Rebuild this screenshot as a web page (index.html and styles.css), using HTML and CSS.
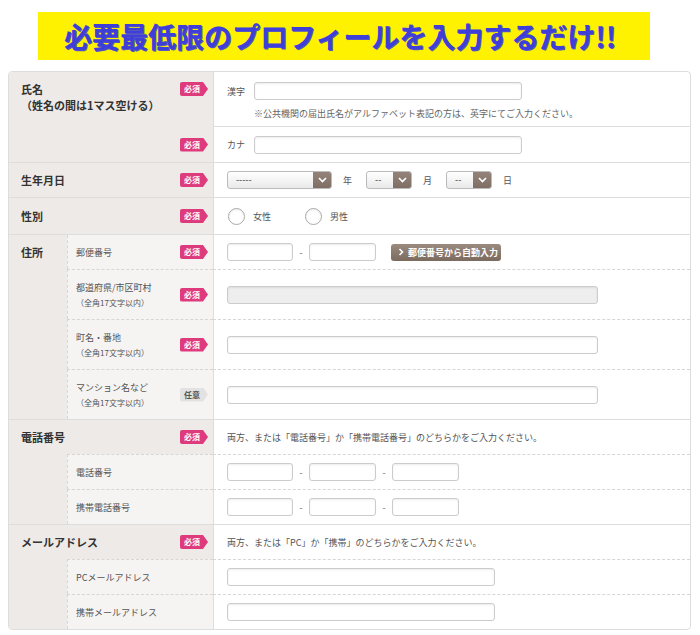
FILE: index.html
```html
<!DOCTYPE html>
<html lang="ja">
<head>
<meta charset="utf-8">
<title>プロフィール入力</title>
<link rel="stylesheet" href="styles.css">
</head>
<body>
<div class="page">
  <div class="banner">必要最低限のプロフィールを入力するだけ!!</div>
  <div class="form">
    <!-- 氏名 -->
    <div class="sec sec-name">
      <div class="lab lab-top"><div class="lt">氏名<br>（姓名の間は1マス空ける）</div><span class="badge">必須</span></div>
      <div class="val val-name">
        <div class="line"><span class="pre">漢字</span><span class="inp w-name"></span></div>
        <p class="note">※公共機関の届出氏名がアルファベット表記の方は、英字にてご入力ください。</p>
      </div>
      <div class="lab"><span></span><span class="badge">必須</span></div>
      <div class="val"><span class="pre">カナ</span><span class="inp w-name"></span></div>
    </div>
    <!-- 生年月日 -->
    <div class="sec sec-birth">
      <div class="lab"><span>生年月日</span><span class="badge">必須</span></div>
      <div class="val">
        <span class="sel w-year"><span class="st">-----</span><span class="sa"><svg width="9" height="6" viewBox="0 0 9 6"><polyline points="1,1 4.5,4.5 8,1" fill="none" stroke="#fff" stroke-width="1.7"/></svg></span></span>
        <span class="unit">年</span>
        <span class="sel w-md"><span class="st">--</span><span class="sa"><svg width="9" height="6" viewBox="0 0 9 6"><polyline points="1,1 4.5,4.5 8,1" fill="none" stroke="#fff" stroke-width="1.7"/></svg></span></span>
        <span class="unit">月</span>
        <span class="sel w-md"><span class="st">--</span><span class="sa"><svg width="9" height="6" viewBox="0 0 9 6"><polyline points="1,1 4.5,4.5 8,1" fill="none" stroke="#fff" stroke-width="1.7"/></svg></span></span>
        <span class="unit">日</span>
      </div>
    </div>
    <!-- 性別 -->
    <div class="sec sec-sex">
      <div class="lab"><span>性別</span><span class="badge">必須</span></div>
      <div class="val">
        <span class="radio"></span><span class="rl">女性</span>
        <span class="radio"></span><span class="rl">男性</span>
      </div>
    </div>
    <!-- 住所 -->
    <div class="sec sec-addr">
      <div class="main main-addr">住所</div>
      <div class="sub"><span>郵便番号</span><span class="badge">必須</span></div>
      <div class="val">
        <span class="inp w-zip"></span><span class="dash">-</span><span class="inp w-zip2"></span>
        <span class="btn"><svg width="6" height="8" viewBox="0 0 6 8"><polyline points="1.5,1 4.5,4 1.5,7" fill="none" stroke="#fff" stroke-width="1.6"/></svg>郵便番号から自動入力</span>
      </div>
      <div class="sub dt"><span class="two">都道府県/市区町村<br><small>（全角17文字以内）</small></span><span class="badge">必須</span></div>
      <div class="val dt"><span class="inp w-addr dis"></span></div>
      <div class="sub dt"><span class="two">町名・番地<br><small>（全角17文字以内）</small></span><span class="badge">必須</span></div>
      <div class="val dt"><span class="inp w-addr"></span></div>
      <div class="sub dt"><span class="two">マンション名など<br><small>（全角17文字以内）</small></span><span class="badge opt">任意</span></div>
      <div class="val dt"><span class="inp w-addr"></span></div>
    </div>
    <!-- 電話番号 -->
    <div class="sec sec-tel">
      <div class="lab"><span>電話番号</span><span class="badge">必須</span></div>
      <div class="val">両方、または「電話番号」か「携帯電話番号」のどちらかをご入力ください。</div>
      <div class="main main-fill"></div>
      <div class="sub dt"><span>電話番号</span></div>
      <div class="val dt"><span class="inp w-zip"></span><span class="dash">-</span><span class="inp w-zip2"></span><span class="dash">-</span><span class="inp w-zip2"></span></div>
      <div class="sub dt"><span>携帯電話番号</span></div>
      <div class="val dt"><span class="inp w-zip"></span><span class="dash">-</span><span class="inp w-zip2"></span><span class="dash">-</span><span class="inp w-zip2"></span></div>
    </div>
    <!-- メールアドレス -->
    <div class="sec sec-mail">
      <div class="lab"><span>メールアドレス</span><span class="badge">必須</span></div>
      <div class="val">両方、または「PC」か「携帯」のどちらかをご入力ください。</div>
      <div class="main main-fill"></div>
      <div class="sub dt"><span>PCメールアドレス</span></div>
      <div class="val dt"><span class="inp w-mail"></span></div>
      <div class="sub dt"><span>携帯メールアドレス</span></div>
      <div class="val dt"><span class="inp w-mail"></span></div>
    </div>
  </div>
</div>
</body>
</html>
```

FILE: styles.css
```css
* { box-sizing: border-box; margin: 0; padding: 0; }
html, body { overflow: hidden; }
body {
  font-family: "Noto Sans CJK JP", "Noto Sans", sans-serif;
  color: #555;
  background: #fff;
}
.page { padding: 12px 9px 0 8px; }

.banner {
  margin-left: 30px;
  width: 612px;
  height: 48px;
  background: #fff200;
  color: #3e3ed8;
  font-size: 28px;
  font-weight: bold;
  letter-spacing: 0;
  display: flex;
  align-items: center;
  justify-content: center;
  padding-right: 8px;
  text-shadow: 1px 1px 0 #5656c0;
}

.form {
  margin-top: 11px;
  border: 1px solid #ddd;
  border-radius: 4px;
  overflow: hidden;
}

.sec {
  display: grid;
  grid-template-columns: 58px 146px 1fr;
  border-top: 1px solid #ddd;
}
.sec:first-child { border-top: 0; }
.sec-name { grid-template-rows: 55px 35px; }
.sec-birth { grid-template-rows: 34px; }
.sec-sex { grid-template-rows: 36px; }
.sec-addr { grid-template-rows: 34px 50px 50px 50px; }
.sec-tel { grid-template-rows: 34px 35px 35px; }
.sec-mail { grid-template-rows: 34px 35px 35px; }

.lab {
  grid-column: 1 / 3;
  background: #eeeae7;
  display: flex;
  align-items: center;
  justify-content: space-between;
  padding: 0 5px 0 12px;
  font-size: 11px;
  font-weight: bold;
  color: #333;
  line-height: 16px;
}
.lab-top { align-items: flex-start; padding-top: 9px; }
.lab-top .badge { margin-top: 1px; }

.main {
  grid-column: 1;
  background: #eeeae7;
  font-size: 11px;
  font-weight: bold;
  color: #333;
  line-height: 16px;
  padding: 9px 0 0 12px;
}
.main-addr { grid-row: 1 / 5; }
.main-fill { grid-row: 2 / 4; }

.sub {
  grid-column: 2;
  background: #f6f4f2;
  border-left: 1px dashed #d6d6d6;
  display: flex;
  align-items: center;
  justify-content: space-between;
  padding: 0 5px 0 8px;
  font-size: 9px;
  color: #555;
  line-height: 15px;
}
.sub small { font-size: 8px; }

.val {
  grid-column: 3;
  border-left: 1px solid #ddd;
  display: flex;
  align-items: center;
  padding-left: 13px;
  font-size: 9px;
  color: #555;
}
.val-name {
  flex-direction: column;
  align-items: flex-start;
  justify-content: flex-start;
  padding-top: 10px;
  border-bottom: 1px solid #ddd;
}
.line { display: flex; align-items: center; }
.note { margin: 8px 0 0 27px; font-size: 9px; color: #666; line-height: 12px; }

.dt { border-top: 1px dashed #d6d6d6; }

.badge {
  flex: none;
  width: 28px;
  height: 14px;
  background: #de3b7d;
  color: #fff;
  font-size: 8px;
  font-weight: bold;
  line-height: 14px;
  padding-left: 4px;
  border-radius: 2px;
  clip-path: polygon(0 0, 23px 0, 28px 7px, 23px 14px, 0 14px);
}
.badge.opt { background: #e2e2e2; color: #555; }

.pre { width: 27px; }
.inp {
  display: block;
  flex: none;
  height: 18px;
  border: 1px solid #ccc;
  border-radius: 3px;
  background: #fff;
  box-shadow: inset 0 1px 2px rgba(0, 0, 0, 0.08);
}
.inp.dis { background: #eee; }
.w-name { width: 268px; }
.w-zip { width: 66px; }
.w-zip2 { width: 67px; }
.w-addr { width: 371px; }
.w-mail { width: 268px; }
.dash { width: 16px; text-align: center; color: #666; }

.btn {
  margin-left: 15px;
  width: 110px;
  height: 17px;
  border-radius: 3px;
  background: linear-gradient(#9b8b7f, #7b6a5e);
  color: #fff;
  font-size: 9px;
  font-weight: bold;
  display: flex;
  align-items: center;
  padding-left: 7px;
  gap: 4px;
}

.sel {
  display: flex;
  height: 18px;
  border: 1px solid #bbb;
  border-radius: 3px;
  background: linear-gradient(#fff, #e9e9e9);
  overflow: hidden;
  flex: none;
}
.w-year { width: 105px; }
.w-md { width: 46px; }
.st { flex: 1; padding-left: 8px; font-size: 9px; color: #333; line-height: 16px; }
.sa {
  width: 18px;
  background: linear-gradient(#93837a, #7e6e63);
  display: flex;
  align-items: center;
  justify-content: center;
}
.unit { margin: 0 14px 0 11px; color: #555; }

.radio {
  width: 17px;
  height: 17px;
  border: 1px solid #aaa;
  border-radius: 50%;
  background: #fff;
  box-shadow: inset 0 1px 2px rgba(0, 0, 0, 0.08);
  flex: none;
  margin-left: 1px;
}
.rl { margin: 0 33px 0 8px; }
```
